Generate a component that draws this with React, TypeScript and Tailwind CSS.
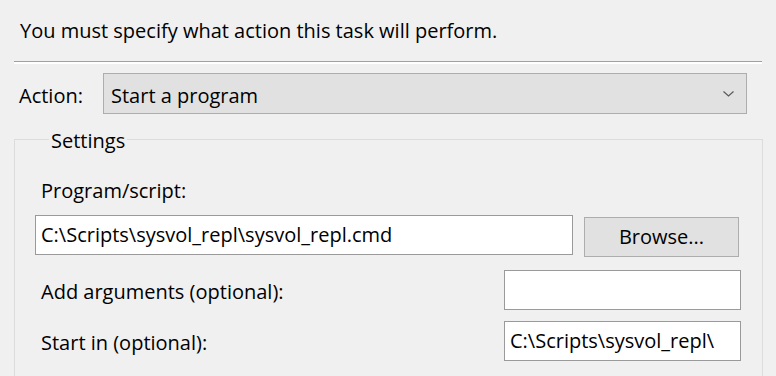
import React from 'react';

const ChevronDown: React.FC = () => (
  <svg width="11" height="6" viewBox="0 0 11 6" fill="none" stroke="#5a5a5a" strokeWidth="1.2">
    <path d="M0.5 0.5 L5.5 5 L10.5 0.5" />
  </svg>
);

const TextBox: React.FC<{ value?: string; className?: string }> = ({ value = '', className = '' }) => (
  <div className={`h-[40px] bg-white border border-[#9a9a9a] flex items-center pl-[5px] ${className}`}>
    <span className="whitespace-nowrap">{value}</span>
  </div>
);

const App: React.FC = () => {
  return (
    <div className="w-[776px] h-[376px] overflow-hidden bg-[#f0f0f0] text-black text-[20px] font-['Open_Sans',sans-serif]">
      <p className="pl-[20px] pt-[17px] leading-[28px]">You must specify what action this task will perform.</p>

      <div className="ml-[14px] mt-[16px] w-[748px] border-t border-[#a0a0a0] border-b-2 border-b-white" />

      <div className="flex items-center mt-[9px]">
        <span className="w-[103px] pl-[19px] pt-[4px] leading-[28px]">Action:</span>
        <div className="w-[644px] h-[41px] bg-[#e1e1e1] border border-[#adadad] flex items-center justify-between pl-[7px] pr-[12px]">
          <span className="pt-[4px]">Start a program</span>
          <ChevronDown />
        </div>
      </div>

      <fieldset className="ml-[14px] mt-[11px] w-[749px] h-[300px] border border-[#dcdcdc] pl-[20px] pr-[21px]">
        <legend className="ml-[14px] px-[2px] pt-[4px] leading-[24px]">Settings</legend>

        <div className="pl-[6px] mt-[24px] leading-[28px]">Program/script:</div>
        <div className="flex items-start mt-[10px]">
          <TextBox value="C:\Scripts\sysvol_repl\sysvol_repl.cmd" className="w-[538px] h-[40px]" />
          <button className="ml-[11px] mt-[2px] w-[155px] h-[40px] bg-[#e1e1e1] border border-[#adadad]">Browse...</button>
        </div>

        <div className="flex items-center justify-between mt-[13px]">
          <span className="pl-[6px] pt-[3px] leading-[28px]">Add arguments (optional):</span>
          <TextBox className="w-[237px]" />
        </div>

        <div className="flex items-center justify-between mt-[11px]">
          <span className="pl-[6px] pt-[3px] leading-[28px]">Start in (optional):</span>
          <TextBox value="C:\Scripts\sysvol_repl\" className="w-[237px]" />
        </div>
      </fieldset>
    </div>
  );
};

export default App;
